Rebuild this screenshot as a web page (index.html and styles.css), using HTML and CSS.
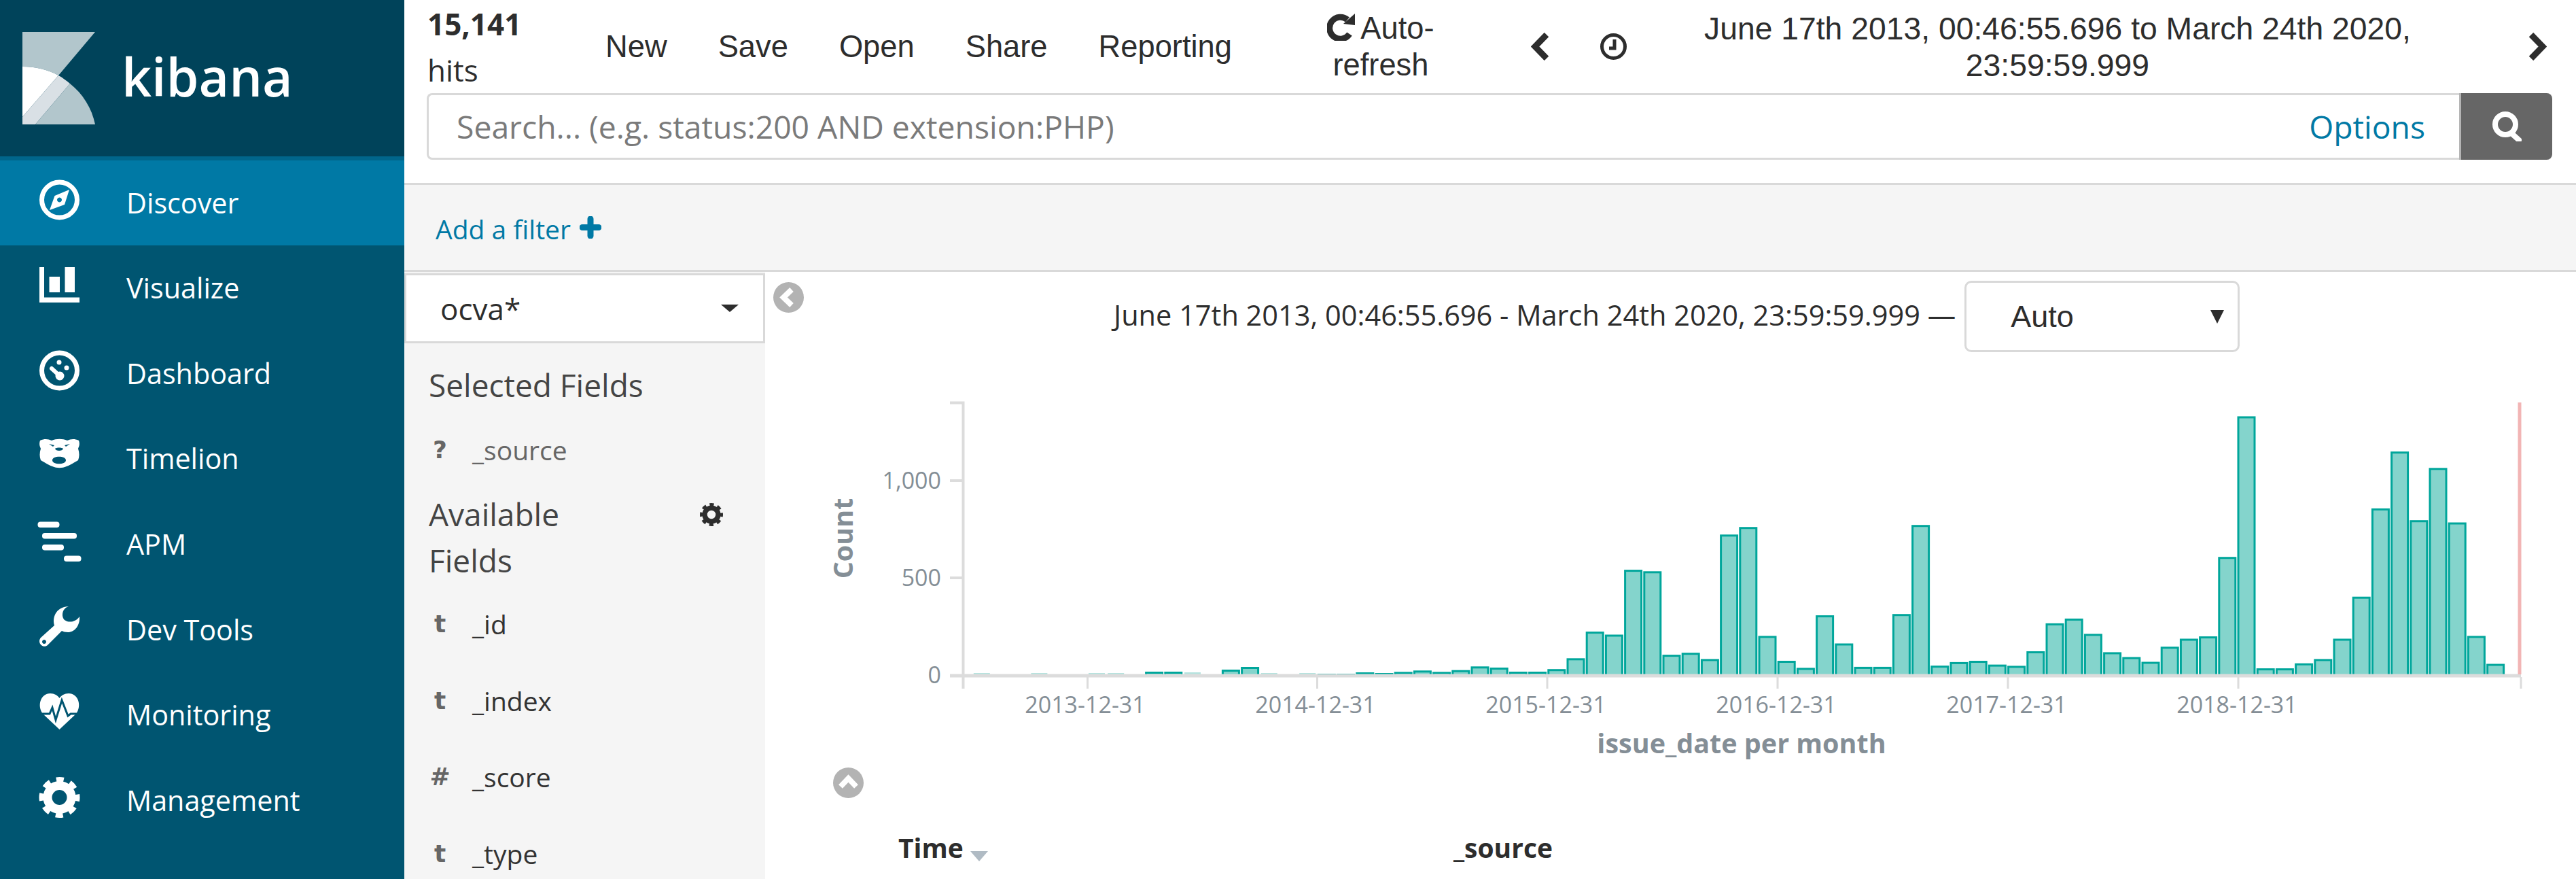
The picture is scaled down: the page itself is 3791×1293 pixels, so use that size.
FILE: index.html
```html
<!DOCTYPE html>
<html lang="en">
<head>
    <meta charset="UTF-8">
    <title>Discover - Kibana</title>
    <link rel="stylesheet" href="styles.css">
</head>
<body>
    <div class="app">
        <nav class="sidebar">
            <div class="brand">
                <svg class="brand-mark" viewBox="33 46 107 136">
                    <path fill="#b2c6cc" d="M33 46H140L86 110C70 101 52 97 33 97Z"/>
                    <path fill="#fff" d="M33 97C52 97 70 101 86 110L33 171Z"/>
                    <path fill="#d9e0e5" d="M86 110C92 113 98 118 103 122L52 182H33V171Z"/>
                    <path fill="#b2c6cc" d="M103 122C122 137 135 158 140 182H52Z"/>
                </svg>
                <span class="brand-name">kibana</span>
            </div>
            <a class="nav-item active">
                <svg class="nav-icon" viewBox="0 0 59 60"><circle class="ring" cx="29.5" cy="30" r="26"/><path fill-rule="evenodd" d="M44 15L37 37L15 45L22.5 24ZM29.5 26.5a3.5 3.5 0 1 0 .01 0Z"/></svg>
                <span>Discover</span>
            </a>
            <a class="nav-item">
                <svg class="nav-icon" viewBox="0 0 59 60"><path d="M0 4H7V48.500H59V56H0ZM14.500 18H30V41H14.500ZM37.500 4H52V41H37.500Z"/></svg>
                <span>Visualize</span>
            </a>
            <a class="nav-item">
                <svg class="nav-icon" viewBox="0 0 59 60"><circle class="ring" cx="29.500" cy="30" r="26"/><circle cx="29" cy="18" r="3.500"/><circle cx="40" cy="26" r="3.500"/><circle cx="30" cy="38" r="6.500"/><path class="needle" d="M18 27L30 38"/></svg>
                <span>Dashboard</span>
            </a>
            <a class="nav-item">
                <svg class="nav-icon" viewBox="0 0 59 60"><path fill-rule="evenodd" d="M1 8C8 5 13 6 18 8C25 5 34 5 41 8C46 6 51 5 58 8C60 14 58 17 57 20C59 26 59 32 57 37C50 41 46 44 40 46C33 49 26 49 19 46C13 44 9 41 2 37C0 32 0 26 2 20C1 17 -1 14 1 8ZM14 13L20 17L22 15ZM45 13L37 15L39 17ZM23 20C24 24 34 24 35 20C33 18 25 18 23 20ZM19 37C19 44 39 44 39 37C39 30 19 30 19 37Z"/></svg>
                <span>Timelion</span>
            </a>
            <a class="nav-item">
                <svg class="nav-icon" viewBox="0 0 59 60"><rect x="-2.500" y="1.500" width="32" height="8.500" rx="4"/><rect x="4" y="18" width="51" height="8.500" rx="4"/><rect x="4" y="35" width="32" height="8.500" rx="4"/><rect x="36" y="51.500" width="25.500" height="8.500" rx="4"/></svg>
                <span>APM</span>
            </a>
            <a class="nav-item">
                <svg class="nav-icon" viewBox="0 0 59 60"><path fill-rule="evenodd" d="M43 0C33 3 32 15 37 20C42 24 53 24 59 15C60 28 52 38 42 38C38 38 35 37 33 36L12 57C8 61 0 58 0 51C0 49 1 47 2 46L22 28C18 14 27 0 43 0ZM7 49a3 3 0 1 0 .01 0Z"/></svg>
                <span>Dev Tools</span>
            </a>
            <a class="nav-item">
                <svg class="nav-icon" viewBox="0 0 59 60"><path d="M29.500 56L5 33C-4 21 2 3 16 3C22 3 27 6 29.500 10C32 6 37 3 43 3C57 3 63 21 54 33Z"/><path class="pulse" d="M0 33H15L19 24L24 42L33 13L42 36L46 33H59"/></svg>
                <span>Monitoring</span>
            </a>
            <a class="nav-item">
                <svg class="nav-icon" viewBox="0 0 59 60"><circle class="gear-body" cx="29.500" cy="30" r="17.500"/><circle class="gear-teeth" cx="29.500" cy="30" r="25"/></svg>
                <span>Management</span>
            </a>
        </nav>

        <main class="main">
            <div class="topnav">
                <div class="hits"><strong>15,141</strong><br>hits</div>
                <div class="menu">
                    <a>New</a>
                    <a>Save</a>
                    <a>Open</a>
                    <a>Share</a>
                    <a>Reporting</a>
                </div>
                <div class="refresh">
                    <svg class="refresh-icon" viewBox="0 0 42 40"><path d="M33 30A16 16 0 1 1 30 9"/><polygon points="24,15 41,17 41,0"/></svg>
                    Auto-<br>refresh
                </div>
                <svg class="chevron chevron-prev" viewBox="0 0 27 41"><polyline points="23,3 6,20.500 23,38"/></svg>
                <svg class="clock" viewBox="0 0 41 41"><circle cx="20.500" cy="20.500" r="17"/><polyline points="22,10 22,23 14,23"/></svg>
                <div class="time-range">June 17th 2013, 00:46:55.696 to March 24th 2020,<br>23:59:59.999</div>
                <svg class="chevron chevron-next" viewBox="0 0 27 41"><polyline points="4,3 21,20.500 4,38"/></svg>
            </div>

            <div class="search-row">
                <div class="search-box">
                    <span class="placeholder">Search... (e.g. status:200 AND extension:PHP)</span>
                    <a class="options">Options</a>
                </div>
                <button class="search-btn" type="button">
                    <svg viewBox="0 0 44 44"><circle cx="20" cy="19" r="15"/><path d="M29 32L40 42"/></svg>
                </button>
            </div>

            <div class="filter-bar">
                <a class="add-filter">Add a filter</a>
                <svg class="plus" viewBox="0 0 32 33"><path d="M16 4V29M4 16.500H28"/></svg>
            </div>

            <div class="content">
                <aside class="fields">
                    <div class="index-select">ocva*<i class="caret"></i></div>
                    <h3 class="fields-title">Selected Fields</h3>
                    <div class="field field-selected"><b>?</b><span>_source</span></div>
                    <div class="fields-head">
                        <h3 class="fields-title">Available<br>Fields</h3>
                        <svg class="fields-gear" viewBox="0 0 59 60"><circle class="gear-body" cx="29.500" cy="30" r="17.500"/><circle class="gear-teeth" cx="29.500" cy="30" r="25"/></svg>
                    </div>
                    <div class="field"><b>t</b><span>_id</span></div>
                    <div class="field"><b>t</b><span>_index</span></div>
                    <div class="field"><b>#</b><span>_score</span></div>
                    <div class="field"><b>t</b><span>_type</span></div>
                </aside>

                <section class="results">
                    <svg class="toggle toggle-side" viewBox="0 0 45 45"><circle cx="22.500" cy="22.500" r="22.500"/><polyline points="27,11 15,22.500 27,34"/></svg>
                    <div class="range-row">
                        <span>June 17th 2013, 00:46:55.696 - March 24th 2020, 23:59:59.999 —</span>
                        <div class="interval">Auto<i class="interval-caret"></i></div>
                    </div>

                    <svg class="chart" id="chart" viewBox="1126 560 2665 560">
                        <g class="axis">
                            <path d="M1398 592.500H1417.500V1013"/>
                            <path d="M1398 707H1417M1398 850H1417"/>
                            <path class="tick" d="M1600.500 996V1013M1938.500 996V1013M2277 996V1013M2616 996V1013M2955 996V1013M3294 996V1013M3710 996V1013"/>
                        </g>
                        <g id="bars"></g>
                        <path class="baseline" d="M1398 994H3710"/>
                        <path class="time-marker" d="M3708 592V992"/>
                        <g class="y-labels">
                            <text x="1385" y="719">1,000</text>
                            <text x="1385" y="862">500</text>
                            <text x="1385" y="1005">0</text>
                        </g>
                        <g class="x-labels">
                            <text x="1597" y="1049">2013-12-31</text>
                            <text x="1936" y="1049">2014-12-31</text>
                            <text x="2275" y="1049">2015-12-31</text>
                            <text x="2614" y="1049">2016-12-31</text>
                            <text x="2953" y="1049">2017-12-31</text>
                            <text x="3292" y="1049">2018-12-31</text>
                        </g>
                        <text class="axis-title" transform="rotate(-90 1242 792)" x="1242" y="805">Count</text>
                        <text class="axis-title" x="2563" y="1108">issue_date per month</text>
                    </svg>

                    <svg class="toggle toggle-up" viewBox="0 0 45 45"><circle cx="22.500" cy="22.500" r="22.500"/><polyline points="11,28 22.500,16 34,28"/></svg>
                    <div class="table-head">
                        <span class="col-time">Time<i class="sort"></i></span>
                        <span class="col-source">_source</span>
                    </div>
                </section>
            </div>
        </main>
    </div>
    <script src="chart.js"></script>
</body>
</html>
```
FILE: styles.css
```css
html, body {
    margin: 0;
    padding: 0;
    height: 1293px;
    overflow: hidden;
    background-color: white;
}
body {
    font-family: "Open Sans", sans-serif;
    color: #2d2d2d;
}
h3 {
    margin: 0;
    font-weight: normal;
}
.app {
    display: flex;
    height: 1293px;
}

/* left nav */
.sidebar {
    width: 595px;
    flex-shrink: 0;
    background-color: #005571;
    color: white;
    font-size: 41.300px;
}
.brand {
    display: flex;
    align-items: center;
    height: 230px;
    padding-left: 33px;
    box-sizing: border-box;
    background-color: #00435a;
}
.brand-mark {
    width: 107px;
    height: 136px;
}
.brand-name {
    margin-left: 39px;
    font-size: 77px;
    font-weight: 600;
    line-height: 1;
    position: relative;
    top: -3px;
}
.nav-item {
    display: flex;
    align-items: center;
    height: 125.700px;
    padding-left: 58px;
    box-sizing: border-box;
}
.nav-item.active {
    background-color: #0079a5;
    border-top: 6px solid #00668b;
    height: 131px;
}
.nav-icon {
    width: 59px;
    height: 60px;
    margin-right: 69px;
    margin-top: -10px;
    fill: white;
    overflow: visible;
}
.nav-item span {
    position: relative;
    top: -1px;
}
.ring {
    fill: none;
    stroke: white;
    stroke-width: 7;
}
.needle {
    stroke: white;
    stroke-width: 6;
    stroke-linecap: round;
}
.pulse {
    fill: none;
    stroke: #005571;
    stroke-width: 3;
}
.gear-body {
    fill: none;
    stroke: white;
    stroke-width: 13;
}
.gear-teeth {
    fill: none;
    stroke: white;
    stroke-width: 10;
    stroke-dasharray: 10.500 9.135;
    stroke-dashoffset: 5.250;
}

.main {
    flex: 1;
    min-width: 0;
}

/* top bar */
.topnav {
    display: flex;
    align-items: center;
    height: 137px;
    padding-left: 34px;
    font-family: "Liberation Sans", Arial, sans-serif;
    font-size: 45.300px;
}
.hits {
    width: 262px;
    flex-shrink: 0;
    font-family: "Open Sans", sans-serif;
    font-size: 44px;
    line-height: 68px;
}
.menu {
    display: flex;
    gap: 75px;
    line-height: 54px;
}
.refresh {
    width: 170px;
    margin-left: 134px;
    flex-shrink: 0;
    text-align: center;
    line-height: 54px;
}
.refresh-icon {
    width: 42px;
    height: 40px;
    margin-right: -3px;
    vertical-align: -3px;
    fill: #2d2d2d;
}
.refresh-icon path {
    fill: none;
    stroke: #2d2d2d;
    stroke-width: 9;
}
.chevron {
    width: 27px;
    height: 41px;
    flex-shrink: 0;
    fill: none;
    stroke: #2d2d2d;
    stroke-width: 9;
}
.chevron-prev {
    margin-left: 136px;
}
.clock {
    width: 41px;
    height: 41px;
    margin-left: 74px;
    flex-shrink: 0;
    fill: none;
    stroke: #2d2d2d;
    stroke-width: 5;
}
.time-range {
    width: 1184px;
    margin-left: 41px;
    flex-shrink: 0;
    font-size: 46.300px;
    text-align: center;
    line-height: 54px;
}
.chevron-next {
    margin-left: 101px;
}

/* search */
.search-row {
    display: flex;
    height: 98px;
    margin: 0 35px 0 33px;
}
.search-box {
    flex: 1;
    display: flex;
    align-items: center;
    justify-content: space-between;
    padding: 0 50px 0 41px;
    border: 3px solid #d9d9d9;
    border-right: none;
    border-radius: 8px 0 0 8px;
    font-size: 46.300px;
}
.placeholder {
    color: #7a7a7a;
}
.options {
    color: #0079a5;
}
.search-btn {
    width: 137px;
    padding: 0;
    background-color: #666;
    border: none;
    border-left: 3px solid #b5b5b5;
    border-radius: 0 8px 8px 0;
    cursor: pointer;
}
.search-btn svg {
    display: block;
    width: 44px;
    height: 44px;
    margin: auto;
    fill: none;
    stroke: white;
    stroke-width: 8;
    stroke-linecap: round;
}

/* filter bar */
.filter-bar {
    display: flex;
    align-items: center;
    height: 125px;
    margin-top: 34px;
    padding-left: 46px;
    background-color: #f5f5f5;
    border-top: 3px solid #d9d9d9;
    border-bottom: 3px solid #d9d9d9;
}
.add-filter {
    position: relative;
    top: 2px;
    font-size: 39px;
    color: #0079a5;
}
.plus {
    width: 32px;
    height: 33px;
    margin-left: 13px;
    fill: none;
    stroke: #0079a5;
    stroke-width: 9;
    stroke-linecap: round;
}

.content {
    display: flex;
}

/* field list */
.fields {
    width: 531px;
    height: 893px;
    flex-shrink: 0;
    background-color: #f5f5f5;
    overflow: hidden;
}
.index-select {
    display: flex;
    align-items: center;
    justify-content: space-between;
    height: 103px;
    margin-top: 2px;
    padding: 0 36px 0 50px;
    box-sizing: border-box;
    background-color: white;
    border: 3px solid #d9d9d9;
    font-size: 44px;
}
.caret {
    width: 0;
    height: 0;
    border-left: 13px solid transparent;
    border-right: 13px solid transparent;
    border-top: 11px solid #2d2d2d;
}
.fields-title {
    padding-left: 36px;
    font-size: 46px;
    line-height: 68px;
    color: #444;
}
.fields > .fields-title {
    margin-top: 27px;
}
.field {
    display: flex;
    align-items: center;
    height: 112.700px;
    padding-left: 36px;
    font-size: 39px;
    color: #333;
}
.field b {
    width: 58px;
    padding-right: 25px;
    box-sizing: border-box;
    text-align: center;
    font-family: "DejaVu Sans", sans-serif;
    font-size: 36px;
    color: #666;
}
.field span {
    margin-left: 6px;
}
.field-selected {
    height: 122px;
    color: #666;
}
.fields-head {
    display: flex;
    justify-content: space-between;
    height: 139px;
    padding-right: 62px;
}
.fields-gear {
    width: 34px;
    height: 34px;
    margin-top: 18px;
}
.fields-gear .gear-body,
.fields-gear .gear-teeth {
    stroke: #2d2d2d;
}

/* chart area */
.results {
    flex: 1;
    min-width: 0;
    position: relative;
}
.toggle {
    width: 45px;
    height: 45px;
    fill: #b3b3b3;
}
.toggle polyline {
    fill: none;
    stroke: white;
    stroke-width: 8;
}
.toggle-side {
    position: absolute;
    left: 12px;
    top: 15px;
}
.range-row {
    display: flex;
    align-items: center;
    height: 105px;
    margin-top: 13px;
    padding-left: 513px;
    font-size: 41.500px;
}
.range-row > span {
    position: relative;
    top: -3px;
}
.interval {
    display: flex;
    align-items: center;
    justify-content: space-between;
    width: 405px;
    height: 105px;
    margin-left: 13px;
    padding: 0 20px 0 65px;
    box-sizing: border-box;
    border: 3px solid #d9d9d9;
    border-radius: 10px;
    font-family: "Liberation Sans", Arial, sans-serif;
    font-size: 45px;
}
.interval-caret {
    width: 0;
    height: 0;
    border-left: 10px solid transparent;
    border-right: 10px solid transparent;
    border-top: 20px solid #2d2d2d;
}
.chart {
    display: block;
    width: 2665px;
    height: 560px;
    margin-top: 42px;
}
.axis path,
.baseline {
    fill: none;
    stroke: #dcdcdc;
    stroke-width: 4;
}
.axis .tick {
    stroke-width: 3;
}
.baseline {
    stroke-width: 5;
}
.time-marker {
    stroke: #f2b5b5;
    stroke-width: 5;
}
.bar {
    fill: #84d4cc;
    stroke: #00a69b;
    stroke-width: 3;
}
.bar-thin {
    fill: #b5e3de;
}
.y-labels text {
    font-size: 34px;
    fill: #848e96;
    text-anchor: end;
}
.x-labels text {
    font-size: 34px;
    fill: #848e96;
    text-anchor: middle;
}
.axis-title {
    font-size: 39.500px;
    font-weight: bold;
    fill: #848e96;
    text-anchor: middle;
}
.toggle-up {
    display: block;
    margin: 9px 0 0 100px;
}
.table-head {
    display: flex;
    margin-top: 46px;
    padding-left: 196px;
    font-size: 39px;
    font-weight: bold;
    line-height: 54px;
}
.col-time {
    width: 817px;
}
.sort {
    display: inline-block;
    width: 0;
    height: 0;
    margin-left: 10px;
    border-left: 13px solid transparent;
    border-right: 13px solid transparent;
    border-top: 15px solid #b0bbc4;
    vertical-align: -5px;
}
```
FILE: chart.js
```js
// monthly bucket heights, index is months from the 2013-12-31 tick
const tickX = 1600.5;
const monthWidth = 28.2;
const baseY = 992;

const thin = { '-6': 2, '-3': 2, 0: 2, 1: 2, 5: 3, 9: 2, 11: 2 };
const buckets = {
    3: 4, 4: 4, 7: 7, 8: 11, 12: 1, 13: 1, 14: 3, 15: 2, 16: 3.7, 17: 5.7, 18: 3.7, 19: 6.3,
    20: 11.7, 21: 10, 22: 4, 23: 4, 24: 7.8, 25: 23.7, 26: 62.9, 27: 58.5, 28: 153.9, 29: 151.7,
    30: 28.9, 31: 31.8, 32: 22.6, 33: 205.7, 34: 216.8, 35: 56.6, 36: 20, 37: 9.6, 38: 86.9, 39: 45.5,
    40: 11.1, 41: 11.1, 42: 88.8, 43: 219.8, 44: 12.9, 45: 18.1, 46: 20, 47: 14.4, 48: 12.6, 49: 34,
    50: 75.1, 51: 82.1, 52: 59.6, 53: 32.6, 54: 25.5, 55: 18.5, 56: 40.7, 57: 52.5, 58: 55.9, 59: 172.8,
    60: 379.6, 61: 8.9, 62: 8.9, 63: 16.3, 64: 22.6, 65: 52.5, 66: 114.3, 67: 244.2, 68: 327.8, 69: 226.8,
    70: 303.7, 71: 223.5, 72: 56.6, 73: 15.5
};

const group = document.getElementById('bars');

function addBar(month, top, height, className) {
    const rect = document.createElementNS('http://www.w3.org/2000/svg', 'rect');
    rect.setAttribute('class', className);
    rect.setAttribute('x', tickX + month * monthWidth + 1.5);
    rect.setAttribute('y', top);
    rect.setAttribute('width', 24);
    rect.setAttribute('height', height);
    group.appendChild(rect);
}

Object.keys(thin).forEach(month => {
    addBar(Number(month), baseY - thin[month], thin[month] + 1, 'bar-thin');
});
Object.keys(buckets).forEach(month => {
    const height = buckets[month];
    addBar(Number(month), baseY - height + 1.5, height, 'bar');
});
```
